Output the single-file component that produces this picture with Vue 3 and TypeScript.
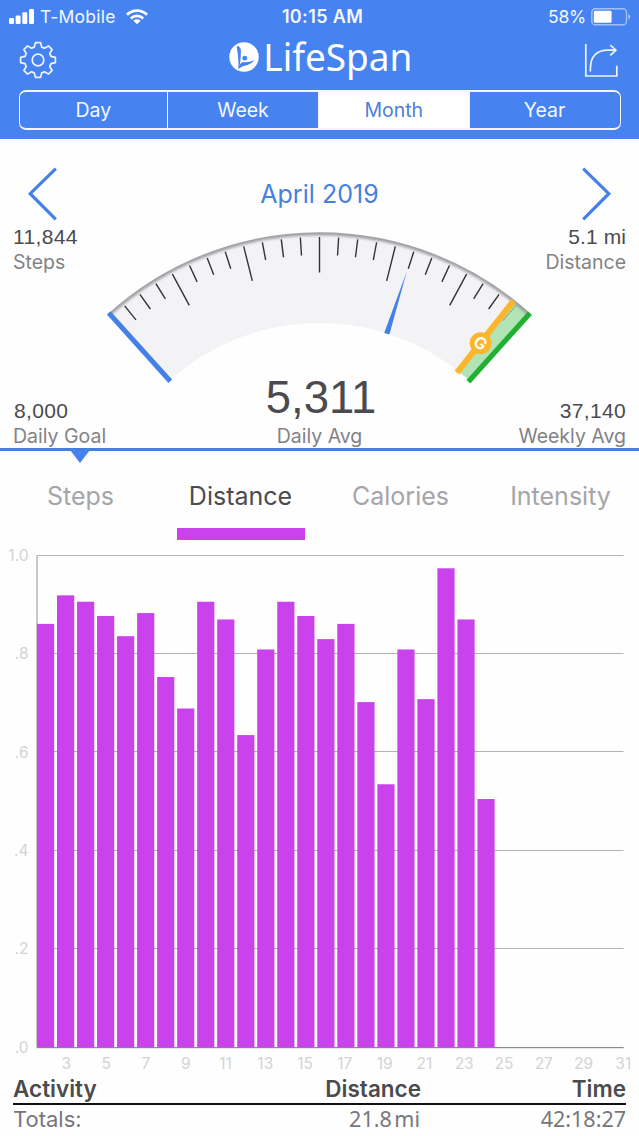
<script setup lang="ts">
interface Tick { key: number; x1: number; y1: number; x2: number; y2: number }

const periods: string[] = ['Day', 'Week', 'Month', 'Year']
const activePeriod = 'Month'
const metrics: string[] = ['Steps', 'Distance', 'Calories', 'Intensity']
const activeMetric = 'Distance'

// Eight-toothed gear outline centred on the origin
const gearPath = ((): string => {
  const pts: string[] = []
  for (let i = 0; i < 8; i++) {
    const a = (i * Math.PI) / 4
    const corners: [number, number][] = [[-3.7, -12.9], [-2.6, -17.4], [2.6, -17.4], [3.7, -12.9]]
    corners.forEach(([x, y], j) => {
      const px = (x * Math.cos(a) - y * Math.sin(a)).toFixed(2)
      const py = (x * Math.sin(a) + y * Math.cos(a)).toFixed(2)
      const cmd = j > 0 ? 'L' : i === 0 ? 'M' : 'A13.4 13.4 0 0 1 '
      pts.push(`${cmd}${px} ${py}`)
    })
  }
  return `${pts.join('')}Z`
})()

// Dial geometry, in the svg's own coordinates
const cx = 319.5
const cy = 547
const outerR = 314
const innerR = 224
const polar = (deg: number, r: number): [number, number] => {
  const a = (deg * Math.PI) / 180
  return [cx + r * Math.sin(a), cy - r * Math.cos(a)]
}
const sector = (from: number, to: number): string => {
  const p = [polar(from, outerR), polar(to, outerR), polar(to, innerR), polar(from, innerR)]
    .map(([x, y]) => `${x.toFixed(2)} ${y.toFixed(2)}`)
  return `M${p[0]}A${outerR} ${outerR} 0 0 1 ${p[1]}L${p[2]}A${innerR} ${innerR} 0 0 0 ${p[3]}Z`
}
const rim = (r: number): string => {
  const a = polar(-42.1, r)
  const b = polar(42.1, r)
  return `M${a[0]} ${a[1]}A${r} ${r} 0 0 1 ${b[0]} ${b[1]}`
}
const spoke = (deg: number, r1: number, r2: number) => {
  const [x1, y1] = polar(deg, r1)
  const [x2, y2] = polar(deg, r2)
  return { x1, y1, x2, y2 }
}
const ticks: Tick[] = []
for (let i = -11; i <= 10; i++) {
  ticks.push({ key: i, ...spoke(i * 3.54, 310, i % 4 === 0 ? 274.5 : 292) })
}
const startEdge = spoke(-42, 315, 223)
const endEdge = spoke(42, 314.5, 222.5)
const goalEdge = spoke(38.25, 313.5, 222)

// Chart
const top = 555.5
const bottom = 1047.5
const grid = [
  { label: '1.0', y: 555.5 },
  { label: '.8', y: 654.1 },
  { label: '.6', y: 752.3 },
  { label: '.4', y: 850.7 },
  { label: '.2', y: 949.1 },
  { label: '.0', y: 1047.5 },
]
const values: number[] = [
  0.861, 0.919, 0.906, 0.877, 0.836, 0.883, 0.753, 0.689, 0.906, 0.87, 0.635, 0.809,
  0.906, 0.877, 0.83, 0.861, 0.702, 0.535, 0.809, 0.708, 0.974, 0.87, 0.505,
]
const barHeight = (v: number): number => v * (bottom - top)
const days: number[] = Array.from({ length: 15 }, (_, i) => 3 + i * 2)
</script>

<template>
  <main class="screen">
    <header class="header">
      <div class="status">
        <div class="carrier">
          <svg width="26" height="16" viewBox="0 0 26 16" fill="#fff">
            <rect x="0" y="9" width="5" height="6" rx="1.2" />
            <rect x="6.6" y="6.5" width="5" height="8.5" rx="1.2" />
            <rect x="13.3" y="3.3" width="5" height="11.7" rx="1.2" />
            <rect x="20" y="0" width="5" height="15" rx="1.2" />
          </svg>
          <span class="carrier-name">T-Mobile</span>
          <svg class="wifi" width="22" height="16" viewBox="0 0 22 16" fill="none" stroke="#fff" stroke-width="2.8">
            <path d="M1 5.8a14.2 14.2 0 0 1 20 0" />
            <path d="M4.8 9.4a8.9 8.9 0 0 1 12.4 0" />
            <path d="M11 15.3l-3.6-3.6a5.1 5.1 0 0 1 7.2 0z" fill="#fff" stroke="none" />
          </svg>
        </div>
        <span class="clock">10:15 AM</span>
        <div class="battery">
          <span class="percent">58%</span>
          <svg width="40" height="18" viewBox="0 0 40 18">
            <rect x="0.8" y="0.8" width="34.7" height="16" rx="3.6" fill="none" stroke="#9fc0f8" stroke-width="1.4" />
            <rect x="2.8" y="2.8" width="17.8" height="12" rx="1.4" fill="#fff" />
            <path d="M37.4 6v5.6q2-.8 2-2.8t-2-2.8z" fill="#9fc0f8" />
          </svg>
        </div>
      </div>
      <div class="brand-row">
        <svg class="gear" width="38" height="38" viewBox="-19 -19 38 38" fill="none" stroke="#eef4ff" stroke-width="1.7" stroke-linejoin="round">
          <path :d="gearPath" />
          <circle r="5.8" />
        </svg>
        <svg class="logo" width="190" height="58" viewBox="0 -8 190 58">
          <circle cx="15" cy="20" r="14.7" fill="#fff" />
          <path d="M7.800 10.200q.6-2 2.300-.6 1.900 1.800 1.800 5-.1 7-.8 12l-1.700 4.600q.4-9-1.600-21z" fill="#4682f0" />
          <circle cx="15.800" cy="21.200" r="2.400" fill="#4682f0" />
          <path d="M8.900 32q1.600-5.900 5.300-6.900 5.500.6 11.300-2.200-2.600 3.800-7 5-4.600.6-9.600 4.100z" fill="#4682f0" />
          <text x="34.300" y="34.300" textLength="149" lengthAdjust="spacingAndGlyphs">LifeSpan</text>
        </svg>
        <svg class="share" width="36" height="36" viewBox="0 0 36 36" fill="none" stroke="#eef4ff" stroke-width="1.7">
          <path d="M1.8 1v32h31V22.8" />
          <path d="M6.4 28.6v-3C6.4 13 13 7.2 24 7.2h7.5" />
          <path d="M26.3 2.2l5.6 5-5.6 5.2" />
        </svg>
      </div>
      <nav class="segments">
        <button v-for="p in periods" :key="p" class="segment" :class="{ active: p === activePeriod }">{{ p }}</button>
      </nav>
    </header>

    <section class="summary">
      <div class="month-row">
        <svg width="30" height="54" viewBox="0 0 30 54" fill="none" stroke="#4480e6" stroke-width="3.2">
          <path d="M28.8 1.6L3.2 26.7l25.6 25.6" />
        </svg>
        <h1 class="month">April 2019</h1>
        <svg width="30" height="54" viewBox="0 0 30 54" fill="none" stroke="#4480e6" stroke-width="3.2">
          <path d="M1.2 1.6l25.6 25.1L1.2 52.3" />
        </svg>
      </div>
      <div class="dial-row">
        <div class="stat">
          <span class="value">11,844</span>
          <span class="caption">Steps</span>
        </div>
        <svg class="dial" width="430" height="160" viewBox="105 228 430 160">
          <defs>
            <clipPath id="dialClip"><path :d="sector(-42.1, 42.1)" /></clipPath>
            <filter id="soft" x="-5%" y="-20%" width="110%" height="140%"><feGaussianBlur stdDeviation="1.6" /></filter>
          </defs>
          <path :d="sector(-42.1, 42.1)" fill="#f3f3f6" />
          <path :d="sector(38.3, 42.1)" fill="#b1e5b5" />
          <g clip-path="url(#dialClip)">
            <path :d="rim(313.5)" fill="none" stroke="#8c8c90" stroke-width="3" filter="url(#soft)" />
          </g>
          <path :d="rim(314)" fill="none" stroke="#a3a3a7" stroke-width="1.5" />
          <line v-for="t in ticks" :key="t.key" :x1="t.x1" :y1="t.y1" :x2="t.x2" :y2="t.y2" stroke="#333336" stroke-width="1.4" />
          <line v-bind="startEdge" stroke="#4480e6" stroke-width="5" />
          <line v-bind="goalEdge" stroke="#fbb62c" stroke-width="6" />
          <path d="M515.5 306l-12.5 14.5" stroke="#617464" stroke-width="1" stroke-dasharray="1.4 .8" />
          <line v-bind="endEdge" stroke="#22b033" stroke-width="5.2" />
          <circle cx="480.6" cy="343.2" r="10.9" fill="#fbb62c" />
          <text class="goal-mark" x="480.6" y="349.1" text-anchor="middle" transform="rotate(38 480.6 343.2)">G</text>
          <path d="M406.8 271.5L389.4 334.6l-5.2-1.5z" fill="#4480e6" />
        </svg>
        <div class="stat right">
          <span class="value miles-value">5.1 mi</span>
          <span class="caption">Distance</span>
        </div>
      </div>
      <div class="average-row">
        <div class="stat">
          <span class="value goal-value">8,000</span>
          <span class="caption">Daily Goal</span>
        </div>
        <div class="average">
          <span class="average-value">5,311</span>
          <span class="caption">Daily Avg</span>
        </div>
        <div class="stat right">
          <span class="value">37,140</span>
          <span class="caption">Weekly Avg</span>
        </div>
      </div>
    </section>

    <nav class="metrics">
      <button v-for="m in metrics" :key="m" class="metric" :class="{ active: m === activeMetric }">{{ m }}</button>
    </nav>

    <svg class="chart" width="639" height="535" viewBox="0 540 639 535">
      <g v-for="g in grid" :key="g.label">
        <line x1="37" x2="623.5" :y1="Math.round(g.y) - 0.5" :y2="Math.round(g.y) - 0.5" stroke="#b3b3b6" />
        <text x="28.5" :y="g.y + 5.2" text-anchor="end">{{ g.label }}</text>
      </g>
      <line x1="37" x2="37" :y1="top" :y2="bottom" stroke="#a5a5a8" stroke-width="1.2" />
      <rect v-for="(v, i) in values" :key="i" :x="37 + i * 20.02" :y="bottom - barHeight(v)" width="17.2" :height="barHeight(v)" fill="#c942ec" />
      <line x1="37" x2="623.5" y1="1047.7" y2="1047.7" stroke="#858088" stroke-width="1" />
      <text v-for="(d, i) in days" :key="d" :x="66.4 + i * 39.78" y="1069.4" text-anchor="middle">{{ d }}</text>
    </svg>

    <section class="totals">
      <div class="row head">
        <span>Activity</span><span>Distance</span><span>Time</span>
      </div>
      <div class="row body">
        <span>Totals:</span><span class="num miles">21.8 mi</span><span class="num">42:18:27</span>
      </div>
    </section>
  </main>
</template>

<style>
body { background: #fefefe; overflow: hidden; }
</style>

<style scoped>
.screen { width: 639px; height: 1136px; overflow: hidden; background: #fefefe; color: #4b4b4f; font-family: Inter, "Liberation Sans", sans-serif; font-weight: 400; }
svg { display: block; flex: none; }
button { border: 0; padding: 0; margin: 0; background: none; font: inherit; color: inherit; }
span, button, h1 { white-space: nowrap; }

.header { height: 139px; box-sizing: border-box; background: #4682f0; color: #f4f8ff; }
.status { display: grid; grid-template-columns: 1fr auto 1fr; align-items: center; height: 33px; padding: 0 8px 0 9px; font-size: 17.5px; }
.carrier { display: flex; align-items: center; }
.carrier-name { margin-left: 5px; letter-spacing: .25px; }
.wifi { margin-left: 10px; }
.clock { font-weight: 600; font-size: 18px; letter-spacing: .35px; padding-left: 5px; }
.battery { display: flex; align-items: center; justify-content: flex-end; gap: 5px; }
.percent { letter-spacing: -.2px; }
.brand-row { display: flex; justify-content: space-between; align-items: center; height: 57px; padding: 0 19px; }
.gear { margin-top: -3px; }
.logo { margin-left: 6px; margin-top: -8px; overflow: visible; }
.share { margin-top: -2px; }
.logo text { font-family: "Noto Sans", "Open Sans", sans-serif; font-size: 38.5px; fill: #fff; }
.segments { display: grid; grid-template-columns: 147.5px 151px 150.5px 1fr; width: 602px; height: 40px; box-sizing: border-box; margin-left: 18.5px; border: solid #f2f6ff; border-width: 2px 1.6px; border-radius: 7px; overflow: hidden; }
.segment { font-size: 19.5px; line-height: 36px; height: 36px; }
.segment + .segment { border-left: 1.5px solid #f2f6ff; }
.segment.active { background: #fff; color: #4d80d8; }

.summary { position: relative; height: 309px; border-bottom: 3px solid #4581dc; }
.summary::after { content: ""; position: absolute; left: 70px; top: 311px; border: 10.5px solid transparent; border-top: 13px solid #4682ee; border-bottom: 0; }
.month-row { display: flex; justify-content: space-between; padding: 28px 27px 0; height: 58px; }
.month { margin: 0; font-size: 25px; line-height: 54px; font-weight: 400; letter-spacing: .05px; color: #4681de; }
.dial-row { display: grid; grid-template-columns: 92px 430px 91px; padding: 0 13px; height: 173px; }
.dial { margin-top: 3px; }
.stat { display: flex; flex-direction: column; font-size: 19.5px; line-height: 25px; }
.right { align-items: flex-end; }
.value { font-family: "Liberation Sans", sans-serif; font-size: 21px; line-height: 23px; margin-bottom: 2px; letter-spacing: .35px; }
.goal-value { padding-left: 1px; }
.miles-value { letter-spacing: .1px; }
.caption { color: #828286; }
.average-row { display: grid; grid-template-columns: 1fr auto 1fr; padding: 1px 13px 0; height: 49px; }
.average { display: flex; flex-direction: column; align-items: center; font-size: 19.5px; line-height: 25px; }
.average-value { font-family: "Liberation Sans", sans-serif; font-size: 45.5px; height: 25px; line-height: 0; padding-left: 3px; margin-top: -1px; margin-bottom: 1px; }
.goal-mark { fill: #fff; font-size: 16.5px; font-weight: 600; }

.metrics { display: grid; grid-template-columns: repeat(4, 160px); height: 89px; }
.metric { display: flex; flex-direction: column; justify-content: flex-start; align-items: center; font-size: 25px; line-height: 90px; color: #a5a5a9; padding-left: 1px; }
.metric.active { color: #4b4b4f; }
.metric.active::after { content: ""; width: 128px; height: 12px; margin-top: -13px; background: #c942ec; }

.chart text { font-size: 15.5px; fill: #d3d3d6; }

.totals { margin: 0 13px; }
.row { display: grid; grid-template-columns: 1fr 96px 205px; text-align: right; }
.row span:first-child { text-align: left; }
.head { height: 28px; line-height: 27px; font-size: 22.5px; font-weight: 600; border-bottom: 2px solid #111; }
.body { height: 30px; line-height: 29px; font-size: 22px; color: #77777b; }
.num { font-family: "Noto Sans", "Open Sans", sans-serif; font-size: 21.5px; line-height: 27px; }
.miles { word-spacing: -3px; padding-right: 1px; }
</style>
